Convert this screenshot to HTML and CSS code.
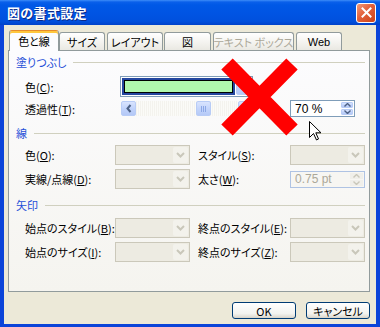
FILE: index.html
```html
<!DOCTYPE html>
<html lang="ja">
<head>
<meta charset="utf-8">
<title>図の書式設定</title>
<link rel="stylesheet" href="styles.css">
</head>
<body>
<div class="window">
  <div class="titlebar">
    <span class="title">図の書式設定</span>
    <span class="close"><svg width="11" height="11" viewBox="0 0 11 11"><path d="M1.5 1.5 L9.5 9.5 M9.5 1.5 L1.5 9.5" stroke="#fff" stroke-width="2" stroke-linecap="square"/></svg></span>
  </div>
  <div class="frame">
    <div class="tabs">
      <div class="tab active">色と線</div>
      <div class="tab">サイズ</div>
      <div class="tab">レイアウト</div>
      <div class="tab">図</div>
      <div class="tab disabled">テキスト ボックス</div>
      <div class="tab web">Web</div>
    </div>
    <div class="panel">
      <div class="group-head"><span>塗りつぶし</span><i class="rule"></i></div>
      <div class="fill-row first">
        <span class="label wide">色(<u>C</u>):</span>
        <div class="colorcombo">
          <div class="selbox"><div class="swatch"></div></div>
          <div class="xpbtn drop"><svg width="9" height="6" viewBox="0 0 9 6"><path d="M1 1 L4.5 4.5 L8 1" fill="none" stroke="#4D6185" stroke-width="2"/></svg></div>
        </div>
      </div>
      <div class="fill-row second">
        <span class="label wide">透過性(<u>T</u>):</span>
        <div class="slider">
          <div class="xpbtn sbtn"><svg width="6" height="9" viewBox="0 0 6 9"><path d="M4.5 1 L1.5 4.5 L4.5 8" fill="none" stroke="#4D6185" stroke-width="2"/></svg></div>
          <div class="track"><div class="thumb"><i></i><i></i><i></i></div></div>
          <div class="xpbtn sbtn"><svg width="6" height="9" viewBox="0 0 6 9"><path d="M1.5 1 L4.5 4.5 L1.5 8" fill="none" stroke="#4D6185" stroke-width="2"/></svg></div>
        </div>
        <div class="spin active-spin">
          <span class="spin-text">70 %</span>
          <div class="spin-btns">
            <div class="xpbtn sp"><svg width="7" height="4" viewBox="0 0 7 4"><path d="M0.5 3.5 L3.5 0.5 L6.5 3.5" fill="none" stroke="#4D6185" stroke-width="1.4"/></svg></div>
            <div class="xpbtn sp"><svg width="7" height="4" viewBox="0 0 7 4"><path d="M0.5 0.5 L3.5 3.5 L6.5 0.5" fill="none" stroke="#4D6185" stroke-width="1.4"/></svg></div>
          </div>
        </div>
      </div>

      <div class="group-head line-head"><span>線</span><i class="rule"></i></div>
      <div class="grid first-grid">
        <span class="label">色(<u>O</u>):</span>
        <div class="combo"><div class="dbtn"><svg width="9" height="6" viewBox="0 0 9 6"><path d="M1 1 L4.5 4.5 L8 1" fill="none" stroke="#C9C7BA" stroke-width="2"/></svg></div></div>
        <span class="label right">スタイル(<u>S</u>):</span>
        <div class="combo"><div class="dbtn"><svg width="9" height="6" viewBox="0 0 9 6"><path d="M1 1 L4.5 4.5 L8 1" fill="none" stroke="#C9C7BA" stroke-width="2"/></svg></div></div>
        <span class="label">実線/点線(<u>D</u>):</span>
        <div class="combo"><div class="dbtn"><svg width="9" height="6" viewBox="0 0 9 6"><path d="M1 1 L4.5 4.5 L8 1" fill="none" stroke="#C9C7BA" stroke-width="2"/></svg></div></div>
        <span class="label right">太さ(<u>W</u>):</span>
        <div class="spin dis-spin">
          <span class="spin-text">0.75 pt</span>
          <div class="spin-btns">
            <div class="dsp"><svg width="7" height="4" viewBox="0 0 7 4"><path d="M0.5 3.5 L3.5 0.5 L6.5 3.5" fill="none" stroke="#C9C7BA" stroke-width="1.4"/></svg></div>
            <div class="dsp"><svg width="7" height="4" viewBox="0 0 7 4"><path d="M0.5 0.5 L3.5 3.5 L6.5 0.5" fill="none" stroke="#C9C7BA" stroke-width="1.4"/></svg></div>
          </div>
        </div>
      </div>

      <div class="group-head arrow-head"><span>矢印</span><i class="rule"></i></div>
      <div class="grid second-grid">
        <span class="label">始点のスタイル(<u>B</u>):</span>
        <div class="combo"><div class="dbtn"><svg width="9" height="6" viewBox="0 0 9 6"><path d="M1 1 L4.5 4.5 L8 1" fill="none" stroke="#C9C7BA" stroke-width="2"/></svg></div></div>
        <span class="label right">終点のスタイル(<u>E</u>):</span>
        <div class="combo"><div class="dbtn"><svg width="9" height="6" viewBox="0 0 9 6"><path d="M1 1 L4.5 4.5 L8 1" fill="none" stroke="#C9C7BA" stroke-width="2"/></svg></div></div>
        <span class="label">始点のサイズ(<u>I</u>):</span>
        <div class="combo"><div class="dbtn"><svg width="9" height="6" viewBox="0 0 9 6"><path d="M1 1 L4.5 4.5 L8 1" fill="none" stroke="#C9C7BA" stroke-width="2"/></svg></div></div>
        <span class="label right">終点のサイズ(<u>Z</u>):</span>
        <div class="combo"><div class="dbtn"><svg width="9" height="6" viewBox="0 0 9 6"><path d="M1 1 L4.5 4.5 L8 1" fill="none" stroke="#C9C7BA" stroke-width="2"/></svg></div></div>
      </div>

      <svg class="redx" width="77" height="78" viewBox="0 0 77 78"><path d="M6 6 L71 72 M71 6 L6 72" stroke="#FF0000" stroke-width="16" stroke-linecap="butt"/></svg>
      <svg class="cursor" width="13" height="20" viewBox="0 0 13 20"><path d="M0.5 0.5 L0.5 16.5 L4.5 12.5 L7.5 19 L9.5 18 L6.8 11.8 L12 11.8 Z" fill="#fff" stroke="#000" stroke-width="1" stroke-linejoin="miter"/></svg>
    </div>
    <div class="buttons">
      <div class="btn">OK</div>
      <div class="btn">キャンセル</div>
    </div>
  </div>
</div>
</body>
</html>
```

FILE: styles.css
```css
* { box-sizing: border-box; }
html, body { margin: 0; padding: 0; }
body {
  width: 380px;
  height: 327px;
  overflow: hidden;
  font-family: "Noto Sans CJK JP", "Noto Sans", sans-serif;
  font-size: 11px;
  font-feature-settings: "palt";
  color: #000;
  background: #ECE9D8;
}
.window {
  width: 380px;
  height: 327px;
  display: flex;
  flex-direction: column;
}
.titlebar {
  height: 25px;
  flex: none;
  display: flex;
  align-items: center;
  justify-content: space-between;
  padding: 0 4px 0 7px;
  background: linear-gradient(#3D8DF8 0, #0A60EA 2px, #0058E6 5px, #0054E3 55%, #0050DD 85%, #0042C9 100%);
}
.title {
  color: #fff;
  font-weight: bold;
  font-size: 13px;
  line-height: 16px;
  letter-spacing: 0.3px;
  font-feature-settings: normal;
  text-shadow: 1px 1px 0 #0A2A8A;
}
.close {
  width: 20px;
  height: 20px;
  border: 1px solid #fff;
  border-radius: 3px;
  background: linear-gradient(135deg, #F29B7B 0%, #E2603A 45%, #CC4418 100%);
  display: flex;
  align-items: center;
  justify-content: center;
}
.close svg { display: block; }
.frame {
  flex: 1;
  display: flex;
  flex-direction: column;
  background: #ECE9D8;
  border-style: solid;
  border-color: #0B44D9;
  border-width: 0 4px 3px 4px;
}
.tabs {
  height: 20px;
  margin: 5px 0 0 5px;
  display: flex;
  align-items: flex-end;
  position: relative;
  z-index: 1;
}
.tab {
  height: 18px;
  border: 1px solid #919B9C;
  border-bottom: none;
  border-radius: 3px 3px 0 0;
  background: linear-gradient(#FFFFFF, #F3F2EE 60%, #E9E8E2);
  display: flex;
  align-items: center;
  justify-content: center;
  line-height: 14px;
  white-space: nowrap;
  padding-top: 1px;
}
.tab:nth-child(1) { width: 50px; }
.tab:nth-child(2) { width: 46px; margin-left: 0; }
.tab:nth-child(3) { width: 56px; margin-left: 2px; }
.tab:nth-child(4) { width: 47px; margin-left: 1px; }
.tab:nth-child(5) { width: 81px; margin-left: 2px; }
.tab:nth-child(6) { width: 46px; margin-left: 2px; }
.tab.active {
  height: 21px;
  margin-bottom: -1px;
  border-top: 1px solid #E68B2C;
  box-shadow: inset 0 2px 0 #FFC73C;
  background: #FCFCFE;
  padding-top: 0;
}
.tab.disabled { color: #ACA899; }
.tab.web { font-family: "Liberation Sans", "Noto Sans", sans-serif; font-size: 11px; }
.panel {
  position: relative;
  height: 242px;
  margin: 0 6px 0 4px;
  border: 1px solid #919B9C;
  background: linear-gradient(#FCFCFE, #F5F4EF);
  padding: 4px 4px 0 7px;
}
.group-head {
  height: 14px;
  display: flex;
  align-items: center;
  color: #1F4FD8;
  line-height: 14px;
  white-space: nowrap;
}
.group-head .rule {
  flex: 1;
  height: 1px;
  margin-left: 7px;
  background: #D0D0BF;
}
.label {
  line-height: 14px;
  white-space: nowrap;
}
.label u { text-decoration-thickness: 1px; text-underline-offset: 1px; }
.fill-row {
  display: flex;
  align-items: center;
  padding-left: 9px;
}
.fill-row.first { margin-top: 7px; height: 21px; }
.fill-row.second { margin-top: 3px; height: 17px; }
.label.wide { width: 95px; }
.colorcombo {
  width: 133px;
  height: 21px;
  border: 1px solid #7F9DB9;
  background: #fff;
  display: flex;
  padding: 1px;
  gap: 1px;
}
.selbox {
  flex: 1;
  background: #24469F;
  padding: 2px;
}
.swatch {
  height: 100%;
  border: 1px solid #000;
  background: #B0F8AE;
}
.xpbtn {
  display: flex;
  align-items: center;
  justify-content: center;
  border: 1px solid #B8CCF6;
  border-radius: 2px;
  background: linear-gradient(#D9E4FE, #C1D3FB 50%, #B4C8F6);
}
.xpbtn svg { display: block; }
.drop { width: 15px; }
.slider {
  width: 132px;
  height: 15px;
  margin-left: 1px;
  display: flex;
}
.sbtn { width: 15px; height: 15px; }
.track {
  flex: 1;
  background: repeating-linear-gradient(90deg, #F4F3EE 0 1px, #FBFBF8 1px 2px);
  padding-left: 60px;
}
.thumb {
  width: 15px;
  height: 15px;
  border: 1px solid #B8CCF6;
  border-radius: 2px;
  background: linear-gradient(#D9E4FE, #C4D5FB 50%, #B6CAF7);
  display: flex;
  align-items: center;
  justify-content: center;
  gap: 1px;
}
.thumb i {
  width: 1px;
  height: 6px;
  background: #8CA8E6;
}
.spin {
  height: 17px;
  display: flex;
  align-items: center;
  padding: 1px;
  border: 1px solid #7F9DB9;
  background: #fff;
}
.active-spin { width: 65px; margin-left: 37px; }
.spin-text { flex: 1; padding-left: 3px; line-height: 14px; font-family: "Liberation Sans", "Noto Sans", sans-serif; font-size: 12px; }
.spin-btns {
  width: 12px;
  height: 13px;
  display: flex;
  flex-direction: column;
  gap: 1px;
}
.spin-btns > div { flex: 1; }
.sp { border-radius: 1px; }
.dsp {
  display: flex;
  align-items: center;
  justify-content: center;
  background: #F0EFEA;
}
.dsp svg { display: block; }
.dis-spin {
  border-color: #AFC3E3;
  background: #F7F6F2;
  color: #ACA899;
}
.dis-spin .spin-btns { width: 13px; }
.line-head { margin-top: 9px; }
.arrow-head { margin-top: 9px; }
.grid {
  display: grid;
  grid-template-columns: 90px 75px 100px 75px;
  grid-auto-rows: 20px;
  row-gap: 4px;
  align-items: center;
  padding-left: 9px;
}
.first-grid { margin-top: 5px; }
.second-grid { margin-top: 6px; }
.label.right { padding-left: 8px; }
.combo {
  height: 20px;
  border: 1px solid #CBC8BA;
  background: #EDEBE2;
  display: flex;
  justify-content: flex-end;
  padding: 1px;
}
.dbtn {
  width: 15px;
  display: flex;
  align-items: center;
  justify-content: center;
  background: #F3F2EC;
  border-radius: 2px;
}
.dbtn svg { display: block; }
.redx {
  position: absolute;
  left: 212px;
  top: 7px;
}
.cursor {
  position: absolute;
  left: 300px;
  top: 70px;
}
.buttons {
  display: flex;
  justify-content: flex-end;
  gap: 10px;
  margin: 10px 6px 0 0;
}
.btn {
  width: 64px;
  height: 17px;
  border: 1px solid #003C74;
  border-radius: 3px;
  background: linear-gradient(#FFFFFF, #F3F3EF 70%, #E1DED5 92%, #D6D0C5);
  display: flex;
  align-items: center;
  justify-content: center;
  line-height: 14px;
}
```
